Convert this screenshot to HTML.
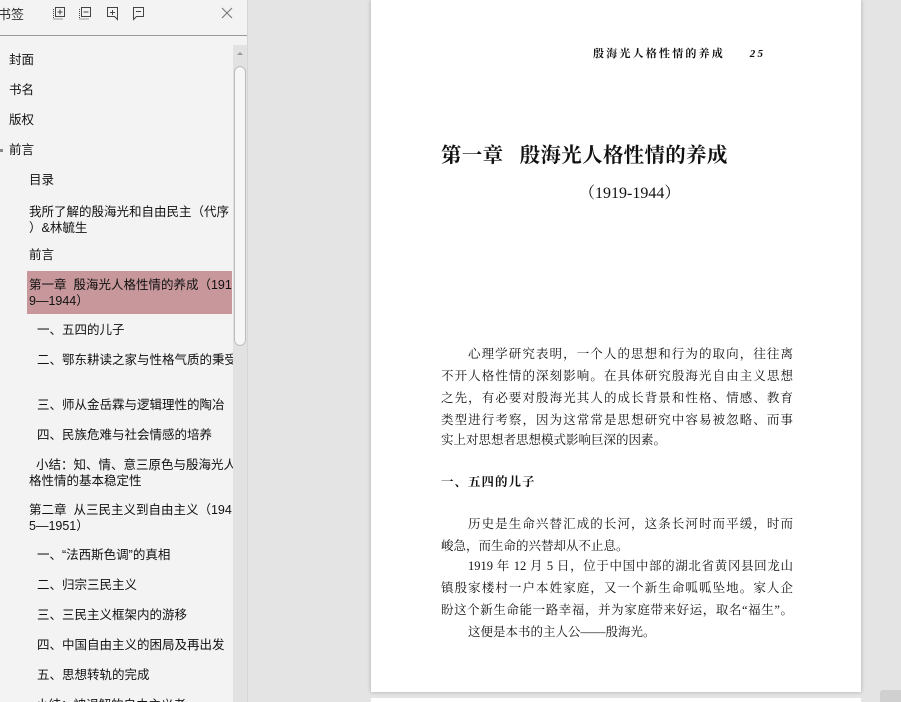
<!DOCTYPE html>
<html><head><meta charset="utf-8"><style>
*{margin:0;padding:0;box-sizing:border-box}
body{width:901px;height:702px;overflow:hidden;background:#e4e4e4;position:relative;font-family:"Liberation Sans","Microsoft YaHei","Noto Sans CJK SC",sans-serif}
#side{position:absolute;left:0;top:0;width:248px;height:702px;background:#f3f3f3;border-right:1px solid #d6d6d6;overflow:hidden}
.it{position:absolute;font-size:12.5px;color:#111;line-height:16px;white-space:nowrap}
#hl{position:absolute;left:27px;top:271px;width:205px;height:43px;background:#c7979b}
#sb{position:absolute;left:233px;top:45px;width:14px;height:657px;background:#e2e2e2}
#thumb{position:absolute;left:234px;top:66px;width:12px;height:280px;background:#f6f6f6;border:1px solid #bdbdbd;border-radius:6px}
#page{position:absolute;left:371px;top:0;width:490px;height:692px;background:#fff;box-shadow:0 0 4px rgba(0,0,0,.25)}
.p{position:absolute;font-family:"Liberation Serif","Noto Serif CJK SC",serif;color:#111;white-space:nowrap;font-size:12.5px}
.j{width:352px;text-align:justify;text-align-last:justify}
</style></head><body>
<div id="side">
<div class="it" style="left:-2px;top:7px;font-size:13px;color:#333">书签</div>
<svg style="position:absolute;left:52px;top:6px" width="110" height="16" fill="none" stroke="#444" stroke-width="1">
<rect x="3.5" y="1.5" width="9" height="9"/><path d="M8 3.5v5M5.5 6h5"/><path d="M1.5 3v10h10" stroke-dasharray="1 1"/>
<rect x="29.5" y="1.5" width="9" height="9"/><path d="M31.5 6h5"/><path d="M27.5 3v10h10" stroke-dasharray="1 1"/>
<path d="M55.5 1.5h10v12l-3-3h-7z"/><path d="M60.5 4v5M58 6.5h5"/>
<path d="M81.5 1.5h10v9h-7l-3 3z"/><path d="M84 5.5h5"/>
</svg>
<svg style="position:absolute;left:221px;top:7px" width="12" height="12" stroke="#777" stroke-width="1.1"><path d="M1 1l10 10M11 1L1 11"/></svg>
<div style="position:absolute;left:0;top:35px;width:247px;height:1px;background:#9a9a9a"></div>
<div id="hl"></div>
<div class="it" style="left:9px;top:52px">封面</div>
<div class="it" style="left:9px;top:82px">书名</div>
<div class="it" style="left:9px;top:112px">版权</div>
<div style="position:absolute;left:0;top:149px;width:3px;height:3px;background:#888"></div>
<div class="it" style="left:9px;top:142px">前言</div>
<div class="it" style="left:29px;top:172px">目录</div>
<div class="it" style="left:29px;top:204px">我所了解的殷海光和自由民主（代序<br>）&amp;林毓生</div>
<div class="it" style="left:29px;top:247px">前言</div>
<div class="it" style="left:29px;top:277px">第一章&nbsp;&nbsp;殷海光人格性情的养成（191<br>9—1944）</div>
<div class="it" style="left:37px;top:322px">一、五四的儿子</div>
<div class="it" style="left:37px;top:352px">二、鄂东耕读之家与性格气质的秉受</div>
<div class="it" style="left:37px;top:397px">三、师从金岳霖与逻辑理性的陶冶</div>
<div class="it" style="left:37px;top:427px">四、民族危难与社会情感的培养</div>
<div class="it" style="left:29px;top:457px">&nbsp;&nbsp;小结：知、情、意三原色与殷海光人<br>格性情的基本稳定性</div>
<div class="it" style="left:29px;top:502px">第二章&nbsp;&nbsp;从三民主义到自由主义（194<br>5—1951）</div>
<div class="it" style="left:37px;top:547px">一、“法西斯色调”的真相</div>
<div class="it" style="left:37px;top:577px">二、归宗三民主义</div>
<div class="it" style="left:37px;top:607px">三、三民主义框架内的游移</div>
<div class="it" style="left:37px;top:637px">四、中国自由主义的困局及再出发</div>
<div class="it" style="left:37px;top:667px">五、思想转轨的完成</div>
<div class="it" style="left:29px;top:697px">&nbsp;&nbsp;小结：被误解的自由主义者</div>
<div id="sb"></div><div id="thumb"></div>
<div style="position:absolute;left:237px;top:52px;width:0;height:0;border:3px solid transparent;border-bottom:3px solid #999;border-top:0"></div>
</div>
<div id="page">
<div class="p" style="left:222px;top:45px;font-size:11px;font-weight:bold;letter-spacing:2.2px">殷海光人格性情的养成&nbsp;&nbsp;&nbsp;&nbsp;&nbsp;<i>25</i></div>
<div class="p" style="left:70px;top:138px;font-size:20.5px;font-weight:bold;letter-spacing:0.3px">第一章&nbsp;&nbsp;&nbsp;殷海光人格性情的养成</div>
<div class="p" style="left:208px;top:180px;font-size:16px">（1919-1944）</div>
<div class="p" style="left:97px;top:344px;width:325px;text-align:justify;text-align-last:justify">心理学研究表明，一个人的思想和行为的取向，往往离</div>
<div class="p j" style="left:70px;top:366px">不开人格性情的深刻影响。在具体研究殷海光自由主义思想</div>
<div class="p j" style="left:70px;top:388px">之先，有必要对殷海光其人的成长背景和性格、情感、教育</div>
<div class="p j" style="left:70px;top:410px">类型进行考察，因为这常常是思想研究中容易被忽略、而事</div>
<div class="p" style="left:70px;top:430px">实上对思想者思想模式影响巨深的因素。</div>
<div class="p" style="left:70px;top:472px;font-weight:bold;letter-spacing:1px">一、五四的儿子</div>
<div class="p" style="left:97px;top:514px;width:325px;text-align:justify;text-align-last:justify">历史是生命兴替汇成的长河，这条长河时而平缓，时而</div>
<div class="p" style="left:70px;top:536px">峻急，而生命的兴替却从不止息。</div>
<div class="p" style="left:97px;top:556px;width:325px;text-align:justify;text-align-last:justify">1919 年 12 月 5 日，位于中国中部的湖北省黄冈县回龙山</div>
<div class="p j" style="left:70px;top:578px">镇殷家楼村一户本姓家庭，又一个新生命呱呱坠地。家人企</div>
<div class="p j" style="left:70px;top:600px">盼这个新生命能一路幸福，并为家庭带来好运，取名“福生”。</div>
<div class="p" style="left:97px;top:622px">这便是本书的主人公——殷海光。</div>
</div>
<div style="position:absolute;left:371px;top:698px;width:490px;height:4px;background:#fff"></div>
<div style="position:absolute;left:880px;top:690px;width:21px;height:12px;background:#d0d0d0;border-radius:3px 0 0 0"></div>
</body></html>
